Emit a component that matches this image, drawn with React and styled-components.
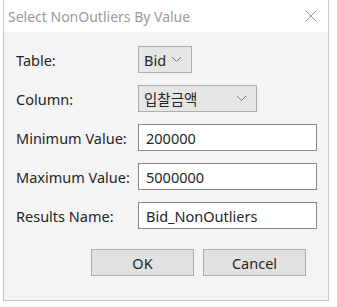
import React from 'react';
import styled, { createGlobalStyle } from 'styled-components';

const GlobalStyle = createGlobalStyle`
  html, body {
    margin: 0;
    padding: 0;
    background: #ffffff;
  }
  body {
    font-family: 'Noto Sans', 'Noto Sans CJK KR', sans-serif;
  }
`;

const Page = styled.div`
  padding-left: 3px;
  width: 337px;
  height: 307px;
  box-sizing: border-box;
`;

const Window = styled.div`
  width: 326px;
  height: 301px;
  box-sizing: border-box;
  border: 1px solid #c9c9c9;
  border-top: none;
  background: #f4f4f4;
  display: flex;
  flex-direction: column;
`;

const TitleBar = styled.div`
  height: 32px;
  background: #ffffff;
  display: flex;
  align-items: center;
  justify-content: space-between;
  padding: 0 11px 0 4px;
  color: #9a9a9a;
  font-size: 14px;
  box-sizing: border-box;
`;

const Body = styled.div`
  padding: 14px 11px 0 12px;
  display: flex;
  flex-direction: column;
`;

const Form = styled.div`
  display: grid;
  grid-template-columns: 122px 1fr;
  grid-auto-rows: 27px;
  row-gap: 12px;
  align-items: center;
`;

const Label = styled.span`
  font-size: 14.5px;
  color: #262626;
`;

const Select = styled.div`
  width: ${(p) => p.$width}px;
  height: 27px;
  box-sizing: border-box;
  background: #e6e6e6;
  border: 1px solid #adadad;
  display: flex;
  align-items: center;
  justify-content: space-between;
  padding: 0 9px 0 5px;
  font-size: 14.5px;
  color: #262626;
`;

const Input = styled.div`
  height: 27px;
  box-sizing: border-box;
  background: #ffffff;
  border: 1px solid #8a8a8a;
  display: flex;
  align-items: center;
  padding: 0 7px;
  font-size: 14.5px;
  color: #262626;
`;

const Buttons = styled.div`
  display: flex;
  justify-content: flex-end;
  gap: 9px;
  margin-top: 20px;
  padding-right: 11px;
`;

const Button = styled.div`
  width: 103px;
  height: 27px;
  box-sizing: border-box;
  background: #e1e1e1;
  border: 1px solid #adadad;
  display: flex;
  align-items: center;
  justify-content: center;
  font-size: 14.5px;
  color: #262626;
`;

const Chevron = () => (
  <svg width="11" height="7" viewBox="0 0 11 7">
    <polyline points="1,1 5.5,5.5 10,1" fill="none" stroke="#7a7a7a" strokeWidth="1" />
  </svg>
);

const Close = () => (
  <svg width="12" height="12" viewBox="0 0 12 12">
    <path d="M0.5 0.5 L11.5 11.5 M11.5 0.5 L0.5 11.5" stroke="#9a9a9a" strokeWidth="1" />
  </svg>
);

export default function App() {
  return (
    <Page>
      <GlobalStyle />
      <Window>
        <TitleBar>
          <span>Select NonOutliers By Value</span>
          <Close />
        </TitleBar>
        <Body>
          <Form>
            <Label>Table:</Label>
            <Select $width={54}>
              <span>Bid</span>
              <Chevron />
            </Select>
            <Label>Column:</Label>
            <Select $width={119}>
              <span>입찰금액</span>
              <Chevron />
            </Select>
            <Label>Minimum Value:</Label>
            <Input>200000</Input>
            <Label>Maximum Value:</Label>
            <Input>5000000</Input>
            <Label>Results Name:</Label>
            <Input>Bid_NonOutliers</Input>
          </Form>
          <Buttons>
            <Button>OK</Button>
            <Button>Cancel</Button>
          </Buttons>
        </Body>
      </Window>
    </Page>
  );
}
